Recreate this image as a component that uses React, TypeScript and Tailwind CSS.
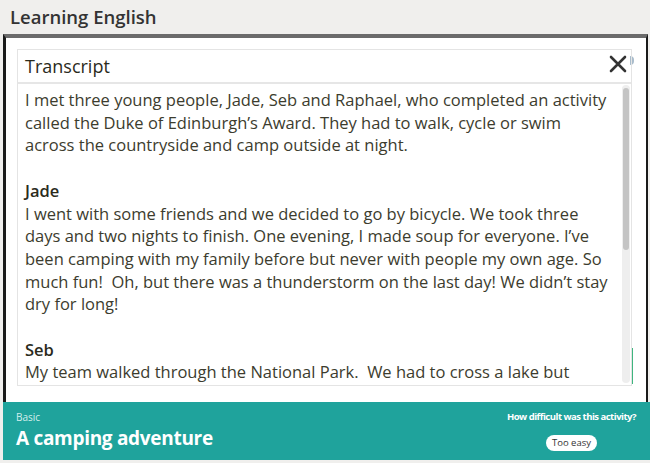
export default function App() {
  return (
    <div className="w-[650px] h-[463px] overflow-hidden bg-[#f0efed] font-['Open_Sans',sans-serif]">
      {/* top page header */}
      <div className="h-[34px] pl-[10px] flex items-center text-[18.5px] font-semibold text-[#333]">
        Learning English
      </div>

      {/* modal frame */}
      <div className="relative ml-[3px] w-[645px] h-[368px] bg-white border-l-[3px] border-l-[#1a1a1a] border-r-[2px] border-r-[#1a1a1a] border-t-[4px] border-t-[#6b6b6b] pl-[11px] pt-[11px]">
        {/* bits of the page behind, peeking out */}
        <div className="absolute left-[624px] top-[18px] w-[4px] h-[9px] rounded-r-full bg-[#a9bccb]"></div>
        <div className="absolute left-[625px] top-[310px] w-[2px] h-[36px] bg-[#3fb57f]"></div>

        {/* transcript box */}
        <div className="relative w-[615px] h-[337px] border border-[#e4e4e4] flex flex-col">
          <div className="h-[34px] shrink-0 flex items-center justify-between pl-[7px] pr-[4px] border-b-[2px] border-[#e6e6e6]">
            <span className="text-[18px] text-[#2b2b1c]">Transcript</span>
            <svg width="18" height="18" viewBox="0 0 18 18" className="mt-[-4px]">
              <path d="M2 2 L16 16 M16 2 L2 16" stroke="#333" strokeWidth="2.6" strokeLinecap="round" />
            </svg>
          </div>

          <div className="flex flex-1 min-h-0">
            <div className="flex-1 overflow-hidden pl-[7px] pt-[5px] text-[16.5px] leading-[22.7px] text-[#3c3c2e] whitespace-nowrap">
              <p>
                I met three young people, Jade, Seb and Raphael, who completed an activity<br />
                called the Duke of Edinburgh’s Award. They had to walk, cycle or swim<br />
                across the countryside and camp outside at night.
              </p>
              <p className="mt-[22.7px] font-semibold text-[#2b2b1c]">Jade</p>
              <p>
                I went with some friends and we decided to go by bicycle. We took three<br />
                days and two nights to finish. One evening, I made soup for everyone. I’ve<br />
                been camping with my family before but never with people my own age. So<br />
                much fun!&nbsp; Oh, but there was a thunderstorm on the last day! We didn’t stay<br />
                dry for long!
              </p>
              <p className="mt-[22.7px] font-semibold text-[#2b2b1c]">Seb</p>
              <p>My team walked through the National Park.&nbsp; We had to cross a lake but</p>
            </div>

            {/* scrollbar */}
            <div className="w-[8px] mr-[1px] mt-[1px] mb-[2px] bg-[#eeeeee] rounded-sm flex flex-col">
              <div className="mt-[3px] h-[162px] mx-[1px] rounded-sm bg-[#c4c4c4]"></div>
            </div>
          </div>
        </div>
      </div>

      {/* activity footer */}
      <div className="ml-[3px] h-[58px] bg-[#1fa39c] flex justify-between pl-[13px] pr-[14px] text-white">
        <div className="flex flex-col pt-[8px]">
          <span className="text-[10px] leading-[14px] text-[#d4efec]">Basic</span>
          <span className="text-[19px] leading-[28px] font-bold tracking-[-0.3px]">A camping adventure</span>
        </div>
        <div className="flex flex-col items-center pt-[8px]">
          <span className="text-[9.5px] leading-[14px] font-bold tracking-[-0.5px]">How difficult was this activity?</span>
          <span className="mt-[11px] h-[16px] px-[6px] rounded-full bg-white text-[9.5px] leading-[16px] text-[#333]">Too easy</span>
        </div>
      </div>
    </div>
  );
}
